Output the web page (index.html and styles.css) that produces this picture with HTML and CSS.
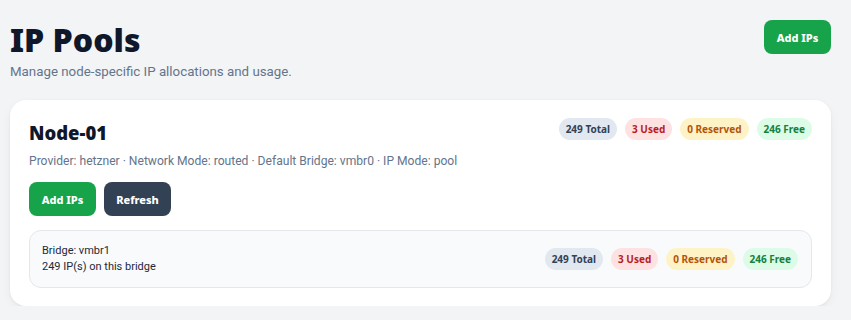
FILE: index.html
```html
<!DOCTYPE html>
<html lang="en">

<head>
    <meta charset="UTF-8">
    <meta name="viewport" content="width=device-width, initial-scale=1.0">
    <title>IP Pools</title>

    <link rel="stylesheet" href="styles.css">
</head>

<body>

    <div class="page">
        <div class="page-header">
            <div>
                <h1 class="page-title">IP Pools</h1>
                <p class="page-subtitle">Manage node-specific IP allocations and usage.</p>
            </div>
            <button class="btn btn-green">Add IPs</button>
        </div>

        <div class="node-card">
            <div class="node-top">
                <h2 class="node-name">Node-01</h2>
                <div class="badges">
                    <span class="badge badge-total">249 Total</span>
                    <span class="badge badge-used">3 Used</span>
                    <span class="badge badge-reserved">0 Reserved</span>
                    <span class="badge badge-free">246 Free</span>
                </div>
            </div>
            <p class="node-meta">Provider: hetzner &middot; Network Mode: routed &middot; Default Bridge: vmbr0 &middot; IP Mode: pool</p>
            <div class="node-actions">
                <button class="btn btn-green">Add IPs</button>
                <button class="btn btn-dark">Refresh</button>
            </div>

            <div class="bridge-row">
                <div class="bridge-info">
                    <div>Bridge: vmbr1</div>
                    <div>249 IP(s) on this bridge</div>
                </div>
                <div class="badges">
                    <span class="badge badge-total">249 Total</span>
                    <span class="badge badge-used">3 Used</span>
                    <span class="badge badge-reserved">0 Reserved</span>
                    <span class="badge badge-free">246 Free</span>
                </div>
            </div>
        </div>
    </div>

</body>

</html>
```

FILE: styles.css
```css
body {
    margin: 0;
    padding: 0;
    background: #f3f4f6;
    font-family: 'Roboto', 'Noto Sans', sans-serif;
    color: #0f172a;
}

.page {
    padding: 20px 20px 0 10px;
}

/* Header with title and main button */
.page-header {
    display: flex;
    justify-content: space-between;
    align-items: flex-start;
}

.page-title {
    margin: 0;
    font-family: 'Noto Sans', sans-serif;
    font-size: 32px;
    font-weight: 900;
    line-height: 40px;
    color: #0f172a;
}

.page-subtitle {
    margin: 4px 0 0;
    font-size: 13.3px;
    color: #64748b;
}

.btn {
    border: none;
    border-radius: 8px;
    height: 34px;
    width: 67px;
    padding: 0;
    font-family: 'Noto Sans', sans-serif;
    font-size: 11px;
    font-weight: 800;
    color: white;
    cursor: pointer;
}

.btn-green {
    background: #16a34a;
}

.btn-dark {
    background: #334155;
}

/* Node card */
.node-card {
    margin-top: 21px;
    background: white;
    border-radius: 16px;
    padding: 18px 19px 18px;
    box-shadow: 0 1px 3px rgba(0, 0, 0, 0.06), 0 4px 12px rgba(0, 0, 0, 0.04);
}

.node-top {
    display: flex;
    justify-content: space-between;
    align-items: flex-start;
}

.node-name {
    margin: 2px 0 0;
    font-family: 'Noto Sans', sans-serif;
    font-size: 18.5px;
    font-weight: 900;
    line-height: 26px;
}

.node-meta {
    margin: 8px 0 0;
    font-size: 12.1px;
    color: #64748b;
}

.node-actions {
    display: flex;
    gap: 8px;
    margin-top: 14px;
}

.badges {
    display: flex;
    gap: 8px;
}

.badge {
    display: inline-flex;
    align-items: center;
    height: 22px;
    padding: 0 7px;
    border-radius: 11px;
    font-family: 'Noto Sans', sans-serif;
    font-size: 10px;
    font-weight: 700;
}

.badge-total {
    background: #e2e8f0;
    color: #334155;
}

.badge-used {
    background: #fee2e2;
    color: #b91c1c;
}

.badge-reserved {
    background: #fef3c7;
    color: #b45309;
}

.badge-free {
    background: #dcfce7;
    color: #15803d;
}

/* Bridge row inside card */
.bridge-row {
    margin-top: 14px;
    display: flex;
    justify-content: space-between;
    align-items: center;
    padding: 12px 13px 12px 12px;
    background: #f8fafc;
    border: 1px solid #e5e7eb;
    border-radius: 12px;
}

.bridge-info {
    font-size: 11px;
    line-height: 16px;
    color: #1f2937;
}
```
